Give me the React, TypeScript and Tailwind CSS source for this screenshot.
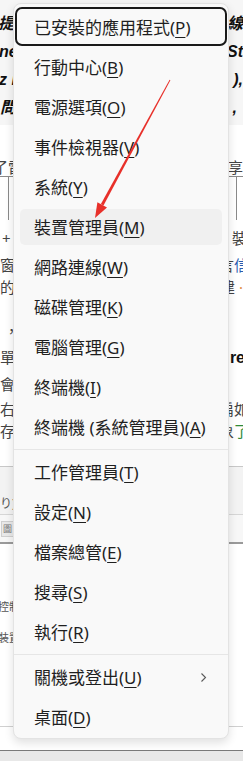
import React from "react";

type Item = { label: string; key: string; sub?: boolean; hover?: boolean; focus?: boolean };

const group1: Item[] = [
  { label: "已安裝的應用程式", key: "P", focus: true },
  { label: "行動中心", key: "B" },
  { label: "電源選項", key: "O" },
  { label: "事件檢視器", key: "V" },
  { label: "系統", key: "Y" },
  { label: "裝置管理員", key: "M", hover: true },
  { label: "網路連線", key: "W" },
  { label: "磁碟管理", key: "K" },
  { label: "電腦管理", key: "G" },
  { label: "終端機", key: "I" },
  { label: "終端機 (系統管理員)", key: "A" },
];
const group2: Item[] = [
  { label: "工作管理員", key: "T" },
  { label: "設定", key: "N" },
  { label: "檔案總管", key: "E" },
  { label: "搜尋", key: "S" },
  { label: "執行", key: "R" },
];
const group3: Item[] = [
  { label: "關機或登出", key: "U", sub: true },
  { label: "桌面", key: "D" },
];

function MenuItem({ item }: { item: Item }) {
  return (
    <div
      className={
        "relative mx-[6px] my-[2px] flex h-9 shrink-0 items-center rounded-[5px] pl-[14px] pr-[15px] " +
        (item.hover ? "bg-[#f0f0f0]" : "")
      }
    >
      <span className="whitespace-nowrap text-[17px] leading-none text-[#1f1f1f]">
        {item.label}(<span className="underline decoration-1 underline-offset-[3px]">{item.key}</span>)
      </span>
      {item.sub && (
        <svg className="ml-auto" width="7" height="11" viewBox="0 0 7 11" fill="none">
          <path d="M1.5 1.5 L5.5 5.5 L1.5 9.5" stroke="#5a5a5a" strokeWidth="1.1" />
        </svg>
      )}
      {item.focus && (
        <div className="pointer-events-none absolute -left-[5px] -right-[5px] -top-[2px] -bottom-[1px] rounded-[7px] border-2 border-[#1a1a1a]" />
      )}
    </div>
  );
}

function Sep() {
  return <div className="my-[2px] h-px shrink-0 bg-[#e6e6e6]" />;
}

function Row({ h, left, right, cls = "" }: { h: number; left?: React.ReactNode; right?: React.ReactNode; cls?: string }) {
  return (
    <div className={"flex shrink-0 items-center justify-between overflow-hidden whitespace-nowrap " + cls} style={{ height: h }}>
      <div>{left}</div>
      <div>{right}</div>
    </div>
  );
}

export default function App() {
  const bold = "font-['Liberation_Sans','Noto_Sans_CJK_TC',sans-serif] text-[16px] font-bold italic text-[#111]";
  const norm = "font-['Noto_Sans','Noto_Sans_CJK_TC',sans-serif] text-[15px] text-[#444]";
  const small = "font-['Noto_Sans','Noto_Sans_CJK_TC',sans-serif] text-[11px] text-[#555]";
  return (
    <div className="relative h-[761px] w-full overflow-hidden bg-white font-['Noto_Sans','Noto_Sans_CJK_TC',sans-serif]">
      {/* background page */}
      <div className="flex flex-col">
        <div className="flex h-[125px] shrink-0 flex-col bg-[#f6f6f6] pt-[9px]">
          <Row h={28} left={<span className={bold + " -ml-[2px]"}>提問</span>} right={<span className={bold + " ml-[1px]"}>線</span>} />
          <Row h={28} left={<span className={bold + " -ml-[1px]"}>ne</span>} right={<span className={bold}>St</span>} />
          <Row h={28} left={<span className={bold + " -ml-[1px]"}>z i</span>} right={<span className={bold + " ml-[3px]"}>),</span>} />
          <Row h={28} left={<span className={bold}>問.</span>} right={<span className={bold + " mr-[6px]"}>,</span>} />
        </div>
        <div className="h-[33px] shrink-0" />
        <Row h={18} left={<span className={norm + " -ml-[7px]"}>了雷</span>} right={<span className={norm}>享</span>} />
        <div className="flex h-[44px] shrink-0 justify-between border-t border-[#8a8a8a]">
          <div className="ml-[8px] w-px bg-[#8a8a8a]" />
          <div className="mr-[6px] w-px bg-[#8a8a8a]" />
        </div>
        <div className="h-[7px] shrink-0" />
        <Row h={22} left={<span className={norm + " ml-[2px]"}>+ 1</span>} right={<span className={norm + " -mr-[4px]"}>T 裝</span>} />
        <div className="h-[5px] shrink-0" />
        <Row h={22} left={<span className={norm}>窗</span>} right={<span className={norm + " -mr-[6px]"}>言<span className="text-[#2a5db0]">信</span></span>} />
        <Row h={22} left={<span className={norm}>的</span>} right={<span className={norm}>建 <span className="text-[#e08a3c]">·</span></span>} />
        <div className="h-[22px] shrink-0" />
        <Row h={22} left={<span className={norm + " ml-[4px]"}>，</span>} />
        <div className="h-[4px] shrink-0" />
        <Row h={22} left={<span className={norm}>單</span>} right={<span className={bold + " not-italic -mr-[2px]"}>re</span>} />
        <div className="h-[5px] shrink-0" />
        <Row h={22} left={<span className={norm}>會</span>} />
        <div className="h-[3px] shrink-0" />
        <Row h={22} left={<span className={norm}>右</span>} right={<span className={norm + " -mr-[6px]"}>扁如</span>} />
        <Row h={22} left={<span className={norm}>存</span>} right={<span className={norm + " -mr-[6px]"}>象<span className="text-[#2f8a3a]">了</span></span>} />
        <div className="h-[24px] shrink-0" />
        <div className="flex h-[48px] shrink-0 flex-col border-t border-[#c8c8c8] bg-[#f3f3f3]">
          <div className="flex-1" />
          <Row h={24} left={<span className={small + " text-[12px]"}>り)</span>} />
        </div>
        <div className="flex h-[28px] shrink-0 items-center border-t border-[#d6d6d6] bg-[#f7f7f7] pl-[1px]">
          <span className="border border-[#cfcfcf] bg-[#e9e9e9] px-[1px] text-[9px] leading-[14px] text-[#777]">圖</span>
        </div>
        <div className="h-[2px] shrink-0 bg-[#9a9a9a]" />
        <div className="h-[51px] shrink-0" />
        <Row h={20} left={<span className={small + " -ml-[2px]"}>控制</span>} />
        <div className="h-[11px] shrink-0" />
        <Row h={20} left={<span className={small + " -ml-[2px]"}>裝置</span>} />
        <div className="h-[80px] shrink-0" />
        <div className="h-px shrink-0 bg-[#d0d0d0]" />
        <div className="h-[23px] shrink-0" />
        <div className="h-px shrink-0 bg-[#7a7a7a]" />
        <div className="h-[20px] shrink-0 bg-[#e8e8e8]" />
      </div>

      {/* context menu overlay */}
      <div className="absolute left-[13px] top-[3px] flex w-[216px] flex-col rounded-[8px] border border-[#e3e3e3] bg-[#f9f9f9] pb-[1px] pt-[3px] shadow-[0_4px_10px_rgba(0,0,0,0.12)]">
        {group1.map((it) => (
          <MenuItem key={it.key} item={it} />
        ))}
        <Sep />
        {group2.map((it) => (
          <MenuItem key={it.key} item={it} />
        ))}
        <Sep />
        {group3.map((it) => (
          <MenuItem key={it.key} item={it} />
        ))}
      </div>

      {/* red arrow annotation */}
      <svg className="pointer-events-none absolute left-0 top-0" width="243" height="761" viewBox="0 0 243 761">
        <polygon points="170.4,80.2 169.6,79.8 100.9,204.1 103.5,205.5" fill="#e8302a" />
        <polygon points="95,218 107,207.4 97.4,202.2" fill="#e8302a" />
      </svg>
    </div>
  );
}
